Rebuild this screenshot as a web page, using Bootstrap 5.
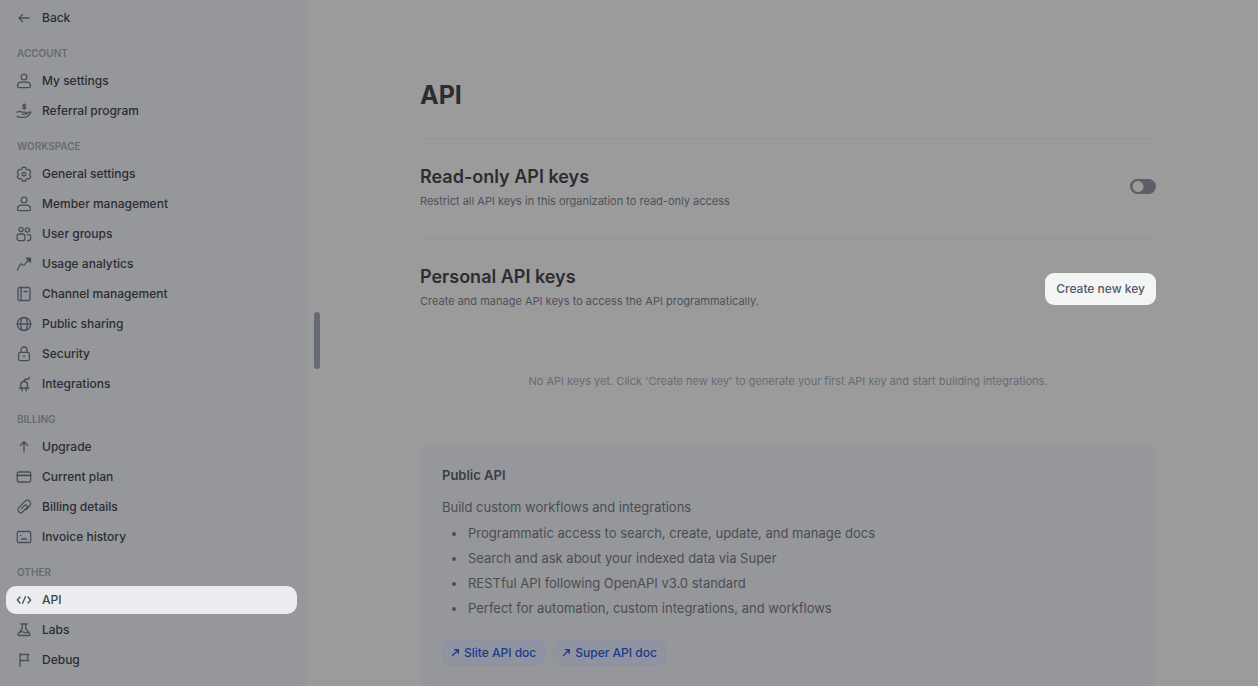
<!DOCTYPE html>
<html lang="en">
<head>
<meta charset="utf-8">
<meta name="viewport" content="width=device-width, initial-scale=1">
<title>API settings</title>
<link href="https://cdn.jsdelivr.net/npm/bootstrap@5.3.0/dist/css/bootstrap.min.css" rel="stylesheet">
<style>
  body { background: #9b9b9b; color: #2b2d33; font-family: Inter, "Liberation Sans", sans-serif; font-size: 12px; line-height: 20px; }
  .side { width: 308px; background: #96979a; padding: 4px 11px 0 6px; border-bottom-right-radius: 8px; }
  .side-list { gap: 2px; }
  .side-link { height: 28px; padding: 0 10px; gap: 10px; border-radius: 10px; color: #2b2d33; font-weight: 500; text-decoration: none; }
  .side-link svg { width: 16px; height: 16px; flex: none; color: #4a4d59; }
  .side-link.active { background: #ebecf0; color: #40434a; }
  .side-title { margin: 13px 0 6px; padding-left: 11px; font-size: 10px; line-height: 16px; font-weight: 600; color: #676a74; text-transform: uppercase; }
  svg { fill: none; stroke: currentColor; stroke-width: 1.3; stroke-linecap: round; stroke-linejoin: round; }
  .drag-handle { position: absolute; top: 312px; right: -12px; width: 6px; height: 57px; border-radius: 3px; background: #666a73; }
  .page { padding-left: 10px; }
  .page-inner { max-width: 736px; padding-top: 77px; }
  h1 { font-size: 25px; line-height: 36px; font-weight: 700; margin: 0 0 25px; }
  h2 { font-size: 18px; line-height: 28px; font-weight: 600; margin: 0; }
  .block { border-top: 1px solid #939496; padding-top: 24px; }
  .block-first { height: 100px; }
  .hint { font-size: 11px; line-height: 20px; color: #4e515a; margin: 0; }
  .empty { font-size: 11px; line-height: 20px; color: #686b74; margin: 60px 0 53px; }
  .form-check-input.toggle { width: 26px; height: 15px; margin: 0; border: 0; background-color: #5c5e69; background-image: radial-gradient(circle at 8px 50%, #9b9b9b 5px, transparent 6px); background-size: 100% 100%; background-position: 0 0; border-radius: 8px; }
  .new-key { height: 32px; margin-bottom: 6px; padding: 0 11px; border: 0; border-radius: 9px; background: #f3f5f5; color: #54576a; font-size: 12px; font-weight: 500; }
  .info { background: #96979a; border-radius: 8px; padding: 21px 22px; color: #4a4d54; font-size: 13px; }
  .info h3 { font-size: 13px; line-height: 20px; font-weight: 600; color: #3b3e45; margin: 0 0 12px; }
  .info li { line-height: 20px; margin-bottom: 5px; padding-left: 1px; }
  .info ul { margin: 6px 0 22px; padding-left: 25px; }
  .doc-link { height: 25px; padding: 0 8px; gap: 4px; border: 1px solid #8b90a2; border-radius: 7px; background: #9194a0; color: #173a8c; font-size: 12px; font-weight: 500; text-decoration: none; }
  .doc-link svg { width: 9px; height: 9px; }
</style>
</head>
<body>
<div class="d-flex vh-100 overflow-hidden">
  <aside class="side position-relative flex-shrink-0">
    <nav aria-label="Settings">
      <a class="side-link d-flex align-items-center" href="#"><svg viewBox="0 0 16 16"><path d="M13 8H3M6.500 4.500 3 8l3.500 3.500"/></svg>Back</a>

      <div class="side-title">Account</div>
      <div class="side-list d-flex flex-column">
        <a class="side-link d-flex align-items-center" href="#"><svg viewBox="0 0 16 16"><circle cx="8" cy="4" r="2.900"/><path d="M1.500 13.200c0-2.500 1.700-4 4-4h5c2.300 0 4 1.500 4 4 0 .9-.6 1.500-1.500 1.500H3c-.9 0-1.500-.6-1.500-1.500z"/></svg>My settings</a>
        <a class="side-link d-flex align-items-center" href="#"><svg viewBox="0 0 16 16"><path d="M9.700 2.100C9.200 1.600 6.700 1.200 6.700 2.600c0 1.300 3 .7 3 2.100 0 1.300-2.500 1.200-3.200.4M8.200.8v5.400M1 9.200c2-1.300 3.700-.9 5 0h3c1.500 0 1.400 1.900 0 1.900H6.500M10.300 10.600l3-1.500c1.300-.5 2 .8 1 1.600l-3.100 2.700c-.8.700-1.600 1-2.700 1H3.700L1 13.300"/></svg>Referral program</a>
      </div>

      <div class="side-title">Workspace</div>
      <div class="side-list d-flex flex-column">
        <a class="side-link d-flex align-items-center" href="#"><svg viewBox="0 0 16 16"><path d="M6.500 1.400h3l.7 1.700 1.300.7 1.800-.2 1.500 2.600-1.100 1.400v1.300l1.100 1.400-1.500 2.600-1.800-.2-1.300.7-.7 1.600h-3l-.7-1.600-1.300-.7-1.800.2-1.500-2.600 1.100-1.400V7.600L1.200 6.200l1.500-2.600 1.800.2 1.300-.7z"/><circle cx="8" cy="8.200" r="1.800"/></svg>General settings</a>
        <a class="side-link d-flex align-items-center" href="#"><svg viewBox="0 0 16 16"><circle cx="8" cy="4" r="2.900"/><path d="M1.500 13.200c0-2.500 1.700-4 4-4h5c2.300 0 4 1.500 4 4 0 .9-.6 1.500-1.500 1.500H3c-.9 0-1.500-.6-1.500-1.500z"/></svg>Member management</a>
        <a class="side-link d-flex align-items-center" href="#"><svg viewBox="0 0 16 16"><circle cx="5" cy="3.500" r="2.100"/><circle cx="11.400" cy="4" r="2.100"/><rect x="1.200" y="8" width="7.600" height="6.700" rx="2"/><path d="M11.200 8.700h1.300c1.300 0 2.200.9 2.200 2.200v1.400c0 1.300-.9 2.200-2.200 2.200h-1"/></svg>User groups</a>
        <a class="side-link d-flex align-items-center" href="#"><svg viewBox="0 0 16 16"><path d="M1.300 14l3-5.500c.4-.6.9-.7 1.400-.3l1.100.9c.6.500 1.100.4 1.500-.2L13.500 3"/><path d="M10.500 2.200h4v4z" fill="currentColor"/></svg>Usage analytics</a>
        <a class="side-link d-flex align-items-center" href="#"><svg viewBox="0 0 16 16"><rect x="2" y="1.500" width="12" height="13" rx="1.500"/><path d="M5 1.500v13M8 5.500h3.300"/></svg>Channel management</a>
        <a class="side-link d-flex align-items-center" href="#"><svg viewBox="0 0 16 16"><circle cx="8" cy="8" r="6.700"/><ellipse cx="8" cy="8" rx="3.300" ry="6.700"/><path d="M1.300 8h13.400"/></svg>Public sharing</a>
        <a class="side-link d-flex align-items-center" href="#"><svg viewBox="0 0 16 16"><rect x="2.600" y="6.400" width="10.800" height="8.200" rx="1.700"/><path d="M5 6.400V4a3 3 0 0 1 6 0v2.400"/><circle cx="8" cy="10.300" r=".4"/></svg>Security</a>
        <a class="side-link d-flex align-items-center" href="#"><svg viewBox="0 0 16 16"><path stroke-width="1.500" d="M3.300 12h9.600M4.800 12V8.700a3.300 3.300 0 0 1 6.600 0V12M6.100 12v2.700M10.100 12v2.700M8.100 5.300c0-1.300.8-2 2-2h1c1.200 0 1.900-.6 2.400-1.800"/></svg>Integrations</a>
      </div>

      <div class="side-title">Billing</div>
      <div class="side-list d-flex flex-column">
        <a class="side-link d-flex align-items-center" href="#"><svg viewBox="0 0 16 16"><path d="M8 13V3M4.500 6.300 8 2.800l3.500 3.500"/></svg>Upgrade</a>
        <a class="side-link d-flex align-items-center" href="#"><svg viewBox="0 0 16 16"><rect x="1.300" y="3" width="13.400" height="10" rx="1.500"/><path d="M1.300 6.400h13.400" stroke-width="1.900"/></svg>Current plan</a>
        <a class="side-link d-flex align-items-center" href="#"><svg viewBox="0 0 16 16"><g transform="rotate(45 8 8)"><path d="M11.300 8.500V3.300a3.300 3.300 0 0 0-6.600 0v8.200a3.300 3.300 0 0 0 4.400 3.400c1-.4 1.400-1.200 1.400-2.300V6.500a1.600 1.600 0 0 0-3.200 0V11"/></g></svg>Billing details</a>
        <a class="side-link d-flex align-items-center" href="#"><svg viewBox="0 0 16 16"><rect x="1.300" y="2.500" width="13.400" height="11" rx="1.200"/><path d="M4.800 6.300v.3M5.500 10h5" stroke-width="1.500"/></svg>Invoice history</a>
      </div>

      <div class="side-title">Other</div>
      <div class="side-list d-flex flex-column">
        <a class="side-link active d-flex align-items-center" href="#" aria-current="page"><svg viewBox="0 0 16 16"><path d="M4 5 1.300 8 4 11M12 5l2.700 3L12 11M9.500 4.600l-3 6.800"/></svg>API</a>
        <a class="side-link d-flex align-items-center" href="#"><svg viewBox="0 0 16 16"><path d="M5 2h6M6.300 2v4.500L2.300 11.800c-.5.900-.1 1.700.9 1.700h9.600c1 0 1.400-.8.900-1.700L9.700 6.500V2M4 10.200c1.500-1 2.700-.7 4 .1s2.500.9 4 0"/></svg>Labs</a>
        <a class="side-link d-flex align-items-center" href="#"><svg viewBox="0 0 16 16"><path d="M4 1.500v13M4 2.500h8.700L11.200 5.500l1.500 3H4"/></svg>Debug</a>
      </div>
    </nav>
    <div class="drag-handle"></div>
  </aside>

  <main class="page flex-grow-1">
    <div class="page-inner mx-auto">
      <h1>API</h1>

      <section class="block block-first d-flex justify-content-between">
        <div>
          <h2><label for="readonly">Read-only API keys</label></h2>
          <p class="hint">Restrict all API keys in this organization to read-only access</p>
        </div>
        <div class="form-switch p-0 mt-3"><input class="form-check-input toggle d-block" type="checkbox" role="switch" id="readonly"></div>
      </section>

      <section class="block">
        <div class="d-flex justify-content-between align-items-end">
          <div>
            <h2>Personal API keys</h2>
            <p class="hint">Create and manage API keys to access the API programmatically.</p>
          </div>
          <button class="new-key" type="button">Create new key</button>
        </div>
        <p class="empty text-center">No API keys yet. Click 'Create new key' to generate your first API key and start building integrations.</p>
      </section>

      <section class="info">
        <h3>Public API</h3>
        <p class="m-0">Build custom workflows and integrations</p>
        <ul>
          <li>Programmatic access to search, create, update, and manage docs</li>
          <li>Search and ask about your indexed data via Super</li>
          <li>RESTful API following OpenAPI v3.0 standard</li>
          <li>Perfect for automation, custom integrations, and workflows</li>
        </ul>
        <div class="d-flex gap-2">
          <a class="doc-link d-flex align-items-center" href="#"><svg viewBox="0 0 9 9"><path d="M1.500 7.500 7 2M3.500 1.700h3.800v3.800"/></svg>Slite API doc</a>
          <a class="doc-link d-flex align-items-center" href="#"><svg viewBox="0 0 9 9"><path d="M1.500 7.500 7 2M3.500 1.700h3.800v3.800"/></svg>Super API doc</a>
        </div>
      </section>
    </div>
  </main>
</div>
<script src="https://cdn.jsdelivr.net/npm/bootstrap@5.3.0/dist/js/bootstrap.bundle.min.js"></script>
</body>
</html>
